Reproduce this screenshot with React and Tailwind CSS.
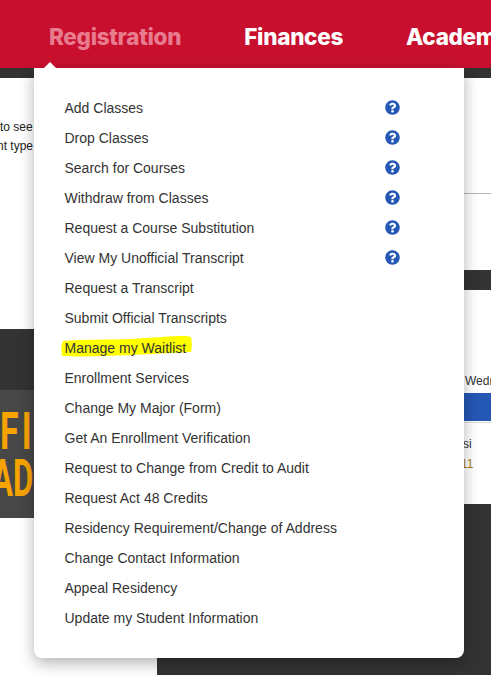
import React from "react";
import { FaQuestionCircle } from "react-icons/fa";

const items = [
  ["Add Classes", true],
  ["Drop Classes", true],
  ["Search for Courses", true],
  ["Withdraw from Classes", true],
  ["Request a Course Substitution", true],
  ["View My Unofficial Transcript", true],
  ["Request a Transcript"],
  ["Submit Official Transcripts"],
  ["Manage my Waitlist", false, true],
  ["Enrollment Services"],
  ["Change My Major (Form)"],
  ["Get An Enrollment Verification"],
  ["Request to Change from Credit to Audit"],
  ["Request Act 48 Credits"],
  ["Residency Requirement/Change of Address"],
  ["Change Contact Information"],
  ["Appeal Residency"],
  ["Update my Student Information"],
];

function Highlight() {
  return (
    <svg className="absolute left-[-4px] top-[2px]" width="132" height="23" viewBox="0 0 132 23">
      <path d="M2 6 C20 4 50 5 70 4 C90 3 105 1 125 1 L130 2 C131 6 131 13 130 17 C110 18 90 19 70 20 C45 21 20 22 1 21 C0 15 0 10 2 6 Z" fill="#ffff00" />
    </svg>
  );
}

export default function App() {
  return (
    <div className="relative h-[676px] w-[491px] overflow-hidden bg-white font-['Liberation_Sans',Arial,sans-serif]">
      <header className="flex h-[68px] items-center gap-[63px] overflow-hidden whitespace-nowrap bg-[#c8102e] pl-[49px] pt-[5px] font-['Inter',sans-serif] text-[22.5px] font-extrabold tracking-[-0.3px]">
        <span className="text-[#e97b8f]">Registration</span>
        <span className="text-white">Finances</span>
        <span className="text-white">Academics</span>
      </header>
      <div className="h-[10px] bg-[#333333]" />
      <div className="flex h-[598px]">
        <div className="w-[157px] shrink-0">
          <div className="h-[251px] overflow-hidden whitespace-nowrap pt-[40px] text-[12px] leading-[19px] text-[#222222]">
            <div>to see</div>
            <div className="-ml-[3px]">nt type</div>
          </div>
          <div className="h-[61px] bg-[#333333]" />
          <div className="h-[128px] overflow-hidden whitespace-nowrap bg-[#474747] pt-[18px] font-['Roboto',sans-serif] text-[52px] font-bold leading-[47px] text-[#f7a400]">
            <div className="origin-left scale-x-[0.65] tracking-[5px]">FII</div>
            <div className="-ml-[8px] origin-left scale-x-[0.6]">AD</div>
          </div>
        </div>
        <div className="flex-1">
          <div className="mt-[115px] h-px bg-[#b5b5b5]" />
          <div className="mt-[76px] h-[20px] bg-[#333333]" />
          <div className="mt-[83px] whitespace-nowrap pl-[308px] text-[12px] leading-[16px] text-[#333333]">Wedn</div>
          <div className="mt-[4px] h-[28px] bg-[#2557b5]" />
          <div className="mt-px h-px bg-[#dddddd]" />
          <div className="pt-[11px] text-[12px] leading-[20px] text-[#333333]">
            <div className="pl-[306px]">si</div>
            <div className="pl-[304px] text-[#a87a1a]">11</div>
          </div>
          <div className="mt-[30px] h-[171px] bg-[#333333]" />
        </div>
      </div>

      <div className="absolute left-[34px] top-[68px] h-[590px] w-[430px] rounded-b-[8px] bg-white pl-[30.5px] pt-[25px] shadow-[0_5px_15px_rgba(0,0,0,0.3)]">
        <div className="absolute left-[10px] top-[-6px] size-0 border-x-[6px] border-b-[6px] border-x-transparent border-b-white" />
        <ul className="text-[14px] leading-[30px] text-[#333333]">
          {items.map(([label, help, mark]) => (
            <li key={label} className="flex h-[30px] items-center">
              <span className="relative">
                {mark && <Highlight />}
                <span className="relative">{label}</span>
              </span>
              {help && <FaQuestionCircle className="absolute left-[351px] -mt-[2px] text-[15px] text-[#2557b5]" />}
            </li>
          ))}
        </ul>
      </div>
    </div>
  );
}
